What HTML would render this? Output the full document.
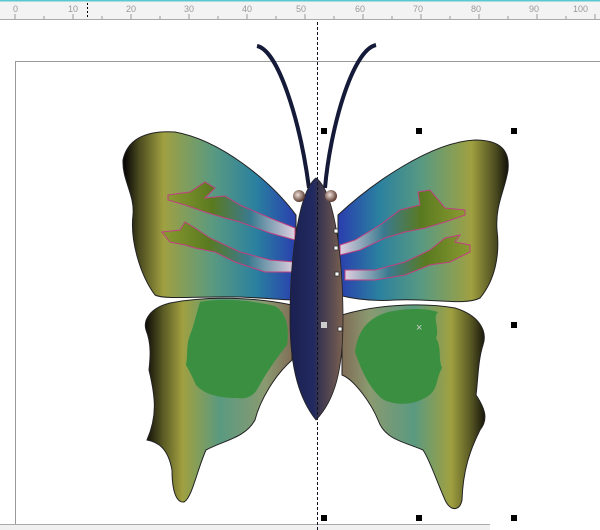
<!DOCTYPE html>
<html><head><meta charset="utf-8"><style>
html,body{margin:0;padding:0;width:600px;height:530px;overflow:hidden;background:#fff}
svg{display:block}
</style></head><body>
<svg width="600" height="530" viewBox="0 0 600 530" font-family="Liberation Sans, sans-serif">
<defs>
<linearGradient id="ul" x1="125" y1="0" x2="300" y2="0" gradientUnits="userSpaceOnUse">
<stop offset="0" stop-color="#0a0805"/><stop offset="0.08" stop-color="#4a4a20"/><stop offset="0.22" stop-color="#a0a040"/><stop offset="0.5" stop-color="#5a9a80"/><stop offset="0.75" stop-color="#2a80a0"/><stop offset="1" stop-color="#2a38b0"/></linearGradient>
<linearGradient id="ur" x1="510" y1="0" x2="335" y2="0" gradientUnits="userSpaceOnUse">
<stop offset="0" stop-color="#0a0805"/><stop offset="0.08" stop-color="#4a4a20"/><stop offset="0.22" stop-color="#a0a040"/><stop offset="0.5" stop-color="#5a9a80"/><stop offset="0.75" stop-color="#2a80a0"/><stop offset="1" stop-color="#2a38b0"/></linearGradient>
<linearGradient id="ll" x1="145" y1="0" x2="295" y2="0" gradientUnits="userSpaceOnUse">
<stop offset="0" stop-color="#0a0805"/><stop offset="0.12" stop-color="#5a5a25"/><stop offset="0.25" stop-color="#a0a040"/><stop offset="0.5" stop-color="#5a9a80"/><stop offset="0.8" stop-color="#8a9a70"/><stop offset="1" stop-color="#806a55"/></linearGradient>
<linearGradient id="lr" x1="488" y1="0" x2="340" y2="0" gradientUnits="userSpaceOnUse">
<stop offset="0" stop-color="#0a0805"/><stop offset="0.12" stop-color="#5a5a25"/><stop offset="0.25" stop-color="#a0a040"/><stop offset="0.5" stop-color="#5a9a80"/><stop offset="0.8" stop-color="#8a9a70"/><stop offset="1" stop-color="#806a55"/></linearGradient>
<linearGradient id="bd" x1="290" y1="0" x2="343" y2="0" gradientUnits="userSpaceOnUse">
<stop offset="0" stop-color="#1a2050"/><stop offset="0.45" stop-color="#222a60"/><stop offset="0.55" stop-color="#3a3550"/><stop offset="1" stop-color="#7a6050"/></linearGradient>
<radialGradient id="eye" cx="0.4" cy="0.4" r="0.6"><stop offset="0" stop-color="#f0e0d8"/><stop offset="1" stop-color="#5a3a30"/></radialGradient>
<linearGradient id="st" x1="0" y1="0" x2="1" y2="0"><stop offset="0" stop-color="#8a9a30"/><stop offset="0.35" stop-color="#5a7a20"/><stop offset="0.65" stop-color="#3a7a90"/><stop offset="1" stop-color="#e0d0e0"/></linearGradient>
<linearGradient id="st2" x1="1" y1="0" x2="0" y2="0"><stop offset="0" stop-color="#8a9a30"/><stop offset="0.35" stop-color="#5a7a20"/><stop offset="0.65" stop-color="#3a7a90"/><stop offset="1" stop-color="#e0d0e0"/></linearGradient>
</defs>
<rect x="0" y="0" width="600" height="20" fill="#f3f3f3"/>
<rect x="0" y="0" width="600" height="1.5" fill="#5ac8d0"/>
<line x1="0" y1="19.5" x2="600" y2="19.5" stroke="#aaa"/>
<g stroke="#999" stroke-width="1">
<path d="M15 14V19M73 14V19M131 14V19M189 14V19M247 14V19M305 14V19M363 14V19M421 14V19M479 14V19M537 14V19M595 14V19"/>
<path d="M44 16V19M102 16V19M160 16V19M218 16V19M276 16V19M334 16V19M392 16V19M450 16V19M508 16V19M566 16V19" />
</g>
<g fill="#999" font-size="9">
<text x="13" y="12">0</text><text x="68" y="12">10</text><text x="126" y="12">20</text><text x="184" y="12">30</text><text x="242" y="12">40</text><text x="296" y="12">50</text><text x="355" y="12">60</text><text x="413" y="12">70</text><text x="471" y="12">80</text><text x="529" y="12">90</text><text x="573" y="12">100</text>
</g>
<line x1="87.5" y1="3" x2="87.5" y2="19" stroke="#000" stroke-dasharray="2,2"/>
<path d="M15.5 530V61.5H600" fill="none" stroke="#999"/>
<rect x="0" y="524" width="490" height="6" fill="#f0f0f0"/>
<line x1="0" y1="524.5" x2="490" y2="524.5" stroke="#aaa"/>
<path d="M257 46C278 50 300 120 309 188" fill="none" stroke="#141a38" stroke-width="4"/>
<path d="M376 45C352 50 330 130 325 188" fill="none" stroke="#141a38" stroke-width="4"/>
<path d="M292 305C260 298 210 295 170 303C150 308 143 320 146 330C152 345 150 360 149 370C155 395 158 415 147 440C158 442 168 448 172 470C172 490 176 503 184 502C192 498 197 470 206 450C225 440 245 438 255 420C260 400 275 375 292 360Z" fill="url(#ll)" stroke="#222" stroke-width="1"/>
<path d="M342 315C375 305 420 302 455 308C478 315 488 330 483 345C478 360 478 380 476 395C486 410 488 420 480 430C470 450 463 470 462 500C460 510 452 512 446 502C438 485 430 460 423 450C405 442 385 440 378 420C372 405 355 380 342 375Z" fill="url(#lr)" stroke="#222" stroke-width="1"/>
<path d="M200 302C196 315 194 325 190 335C186 345 188 355 186 365C190 372 194 380 196 385C205 395 220 398 237 398C248 400 255 394 258 388C265 375 275 360 287 345C290 325 285 312 275 306C250 300 222 298 200 302Z" fill="#3a9040"/>
<path d="M438 312C432 318 440 328 436 338C442 348 438 358 442 368C436 378 438 390 428 396C415 405 398 406 384 400C370 390 362 372 355 352C358 330 368 318 388 312C408 308 425 308 438 312Z" fill="#3a9040"/>
<path d="M296 215C270 180 220 140 175 132C145 130 127 140 123 160C122 180 135 195 133 215C130 240 140 275 155 295C165 300 200 296 240 297C265 298 285 300 296 300Z" fill="url(#ul)" stroke="#222" stroke-width="1"/>
<path d="M338 215C370 185 430 142 475 140C500 140 510 150 508 170C505 190 495 205 497 230C500 255 495 280 480 298C465 306 430 298 395 300C370 302 350 298 338 295Z" fill="url(#ur)" stroke="#222" stroke-width="1"/>
<path d="M168 195L190 192L205 182L215 188L205 198L225 196L240 205L270 218L295 228L295 240L270 233L240 222L225 218L205 212L185 205L168 200Z" fill="url(#st)" stroke="#c04080" stroke-width="1"/>
<path d="M162 232L180 230L185 222L195 228L210 238L240 252L270 260L295 262L295 272L265 272L235 262L215 252L195 248L185 245L170 242Z" fill="url(#st)" stroke="#c04080" stroke-width="1"/>
<path d="M465 210L445 208L430 190L418 192L420 205L400 210L380 225L355 240L340 245L340 255L360 250L385 238L405 232L425 228L445 222L465 215Z" fill="url(#st2)" stroke="#c04080" stroke-width="1"/>
<path d="M470 245L455 242L460 235L445 238L430 250L405 262L375 270L345 270L345 280L375 280L405 275L430 265L450 262L470 252Z" fill="url(#st2)" stroke="#c04080" stroke-width="1"/>
<path d="M316 178C300 190 290 250 290 320C290 370 300 400 316 420C335 400 343 370 343 320C343 250 333 190 316 178Z" fill="url(#bd)" stroke="#222" stroke-width="0.8"/>
<circle cx="299" cy="196" r="6" fill="url(#eye)"/>
<circle cx="331" cy="196" r="6" fill="url(#eye)"/>
<line x1="317.5" y1="22" x2="317.5" y2="530" stroke="#112" stroke-dasharray="3,2"/>
<g fill="#000">
<rect x="321" y="128" width="6" height="6"/><rect x="416" y="128" width="6" height="6"/><rect x="511" y="128" width="6" height="6"/>
<rect x="511" y="322" width="6" height="6"/>
<rect x="321" y="515" width="6" height="6"/><rect x="416" y="515" width="6" height="6"/><rect x="511" y="515" width="6" height="6"/>
</g>
<rect x="321" y="322" width="6" height="6" fill="#ccc"/>
<g fill="#fff" stroke="#333" stroke-width="0.8">
<rect x="334" y="229" width="4" height="4"/><rect x="334" y="246" width="4" height="4"/><rect x="335" y="272" width="4" height="4"/><rect x="338" y="327" width="4" height="4"/>
</g>
<text x="416" y="331" fill="#ccc" font-size="11">×</text>
</svg>
</body></html>
